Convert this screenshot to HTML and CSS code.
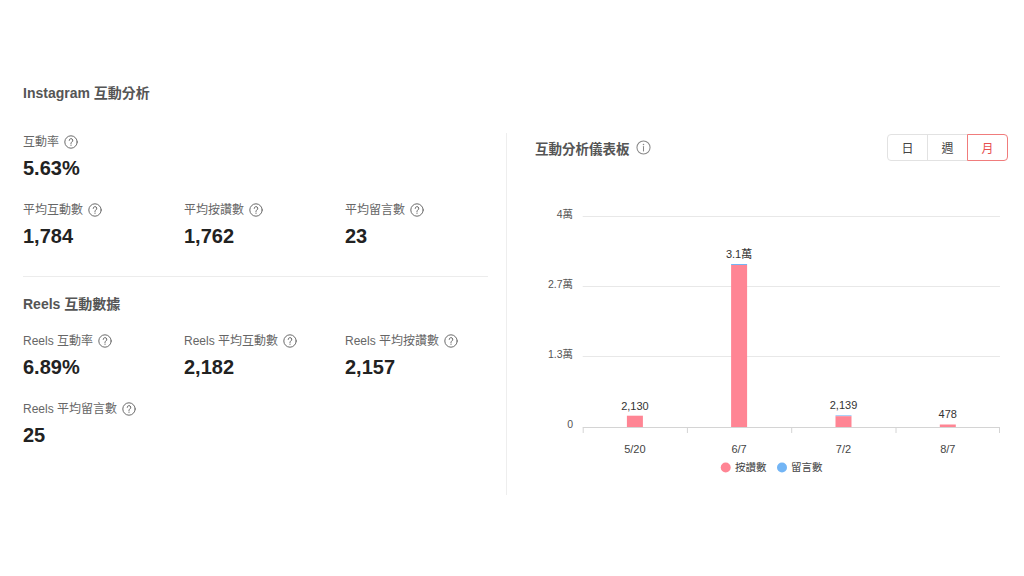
FILE: index.html
```html
<!DOCTYPE html>
<html lang="zh-Hant">
<head>
    <meta charset="UTF-8">
    <meta name="viewport" content="width=device-width, initial-scale=1.0">
    <title>Instagram 互動分析</title>
    <link rel="stylesheet" href="styles.css">
</head>
<body>
    <div class="dashboard">
        <section class="stats">
            <div class="statBlock">
                <h2 class="blockTitle">Instagram 互動分析</h2>
                <div class="metrics">
                    <div class="metric wide">
                        <div class="metricLabel">互動率 <svg class="help" viewBox="0 0 14 14"><circle cx="7" cy="7" r="6.2"/><path d="M5.2 5.4a1.8 1.8 0 1 1 2.5 1.7c-.5.2-.7.6-.7 1.1v.5"/><circle class="dot" cx="7" cy="10.2" r=".6"/></svg></div>
                        <div class="metricValue">5.63%</div>
                    </div>
                    <div class="metric">
                        <div class="metricLabel">平均互動數 <svg class="help" viewBox="0 0 14 14"><circle cx="7" cy="7" r="6.2"/><path d="M5.2 5.4a1.8 1.8 0 1 1 2.5 1.7c-.5.2-.7.6-.7 1.1v.5"/><circle class="dot" cx="7" cy="10.2" r=".6"/></svg></div>
                        <div class="metricValue">1,784</div>
                    </div>
                    <div class="metric">
                        <div class="metricLabel">平均按讚數 <svg class="help" viewBox="0 0 14 14"><circle cx="7" cy="7" r="6.2"/><path d="M5.2 5.4a1.8 1.8 0 1 1 2.5 1.7c-.5.2-.7.6-.7 1.1v.5"/><circle class="dot" cx="7" cy="10.2" r=".6"/></svg></div>
                        <div class="metricValue">1,762</div>
                    </div>
                    <div class="metric">
                        <div class="metricLabel">平均留言數 <svg class="help" viewBox="0 0 14 14"><circle cx="7" cy="7" r="6.2"/><path d="M5.2 5.4a1.8 1.8 0 1 1 2.5 1.7c-.5.2-.7.6-.7 1.1v.5"/><circle class="dot" cx="7" cy="10.2" r=".6"/></svg></div>
                        <div class="metricValue">23</div>
                    </div>
                </div>
            </div>
            <div class="statBlock reels">
                <h2 class="blockTitle">Reels 互動數據</h2>
                <div class="metrics">
                    <div class="metric">
                        <div class="metricLabel">Reels 互動率 <svg class="help" viewBox="0 0 14 14"><circle cx="7" cy="7" r="6.2"/><path d="M5.2 5.4a1.8 1.8 0 1 1 2.5 1.7c-.5.2-.7.6-.7 1.1v.5"/><circle class="dot" cx="7" cy="10.2" r=".6"/></svg></div>
                        <div class="metricValue">6.89%</div>
                    </div>
                    <div class="metric">
                        <div class="metricLabel">Reels 平均互動數 <svg class="help" viewBox="0 0 14 14"><circle cx="7" cy="7" r="6.2"/><path d="M5.2 5.4a1.8 1.8 0 1 1 2.5 1.7c-.5.2-.7.6-.7 1.1v.5"/><circle class="dot" cx="7" cy="10.2" r=".6"/></svg></div>
                        <div class="metricValue">2,182</div>
                    </div>
                    <div class="metric">
                        <div class="metricLabel">Reels 平均按讚數 <svg class="help" viewBox="0 0 14 14"><circle cx="7" cy="7" r="6.2"/><path d="M5.2 5.4a1.8 1.8 0 1 1 2.5 1.7c-.5.2-.7.6-.7 1.1v.5"/><circle class="dot" cx="7" cy="10.2" r=".6"/></svg></div>
                        <div class="metricValue">2,157</div>
                    </div>
                    <div class="metric">
                        <div class="metricLabel">Reels 平均留言數 <svg class="help" viewBox="0 0 14 14"><circle cx="7" cy="7" r="6.2"/><path d="M5.2 5.4a1.8 1.8 0 1 1 2.5 1.7c-.5.2-.7.6-.7 1.1v.5"/><circle class="dot" cx="7" cy="10.2" r=".6"/></svg></div>
                        <div class="metricValue">25</div>
                    </div>
                </div>
            </div>
        </section>

        <section class="chartPanel">
            <div class="chartHeader">
                <h2 class="chartTitle">互動分析儀表板 <svg class="info" viewBox="0 0 16 16"><circle cx="8" cy="8" r="7"/><path d="M8 7v4.6"/><circle class="dot" cx="8" cy="4.8" r=".8"/></svg></h2>
                <div class="periodTabs">
                    <button class="periodTab">日</button>
                    <button class="periodTab">週</button>
                    <button class="periodTab active">月</button>
                </div>
            </div>
            <svg class="chart" width="473" height="280" viewBox="0 0 473 280">
                <g class="grid">
                    <line x1="47.7" y1="16.5" x2="465" y2="16.5"/>
                    <line x1="47.7" y1="86.5" x2="465" y2="86.5"/>
                    <line x1="47.7" y1="156.5" x2="465" y2="156.5"/>
                </g>
                <g class="yLabels">
                    <text x="38" y="15">4萬</text>
                    <text x="38" y="85">2.7萬</text>
                    <text x="38" y="155">1.3萬</text>
                    <text x="38" y="225">0</text>
                </g>
                <g class="bars">
                    <rect class="likes" x="91.9" y="215.7" width="16" height="11.3"/>
                    <rect class="comments" x="196.1" y="64" width="16" height="1"/>
                    <rect class="likes" x="196.1" y="65" width="16" height="162"/>
                    <rect class="comments" x="300.5" y="215.4" width="16" height="0.8"/>
                    <rect class="likes" x="300.5" y="216.2" width="16" height="10.8"/>
                    <rect class="likes" x="404.8" y="224.5" width="16" height="2.5"/>
                </g>
                <g class="axis">
                    <line x1="47.7" y1="227.5" x2="465" y2="227.5"/>
                    <line x1="48.2" y1="227.5" x2="48.2" y2="233"/>
                    <line x1="152.4" y1="227.5" x2="152.4" y2="233"/>
                    <line x1="256.7" y1="227.5" x2="256.7" y2="233"/>
                    <line x1="361" y1="227.5" x2="361" y2="233"/>
                    <line x1="464.5" y1="227.5" x2="464.5" y2="233"/>
                </g>
                <g class="barLabels">
                    <text x="99.9" y="207">2,130</text>
                    <text x="204.1" y="55.5">3.1萬</text>
                    <text x="308.5" y="206.5">2,139</text>
                    <text x="412.8" y="215">478</text>
                </g>
                <g class="xLabels">
                    <text x="99.9" y="250">5/20</text>
                    <text x="204.1" y="250">6/7</text>
                    <text x="308.5" y="250">7/2</text>
                    <text x="412.8" y="250">8/7</text>
                </g>
                <g class="legend">
                    <circle class="likes" cx="190.7" cy="267.5" r="5"/>
                    <text x="200" y="268">按讚數</text>
                    <circle class="comments" cx="247" cy="267.5" r="5"/>
                    <text x="256" y="268">留言數</text>
                </g>
            </svg>
        </section>
    </div>
</body>
</html>
```

FILE: styles.css
```css
*{margin:0;padding:0;box-sizing:border-box;}

html,body{
    width:100%;
    height:100%;
    background:#fff;
    font-family:"Liberation Sans","Noto Sans CJK TC",sans-serif;
    color:#222;
}

.dashboard{
    display:flex;
    align-items:flex-start;
    padding:82px 16px 0 23px;
}

/* left side */
.stats{
    width:465px;
    flex:none;
}

.statBlock{
    padding-bottom:26px;
    border-bottom:1px solid #ececec;
}

.statBlock.reels{
    padding-top:16px;
    border-bottom:none;
}

.blockTitle{
    font-size:14px;
    line-height:22px;
    font-weight:700;
    color:#555;
}

.metrics{
    display:grid;
    grid-template-columns:161px 161px 1fr;
    row-gap:18px;
    margin-top:28px;
}

.reels .metrics{
    margin-top:16px;
}

.metric.wide{
    grid-column:1 / -1;
}

.metricLabel{
    display:flex;
    align-items:center;
    gap:5px;
    font-size:12px;
    line-height:20px;
    color:#666;
}

.help{
    width:14px;
    height:14px;
    fill:none;
    stroke:#6a6a6a;
    stroke-width:1;
    stroke-linecap:round;
}

.help .dot{
    fill:#6a6a6a;
    stroke:none;
}

.metricValue{
    margin-top:2px;
    font-size:20px;
    line-height:28px;
    font-weight:700;
    color:#222;
}

/* right side */
.chartPanel{
    flex:1;
    margin:51px 0 0 18px;
    height:362px;
    border-left:1px solid #eee;
    padding:1px 0 0 28px;
}

.chartHeader{
    display:flex;
    align-items:center;
    justify-content:space-between;
    height:27px;
}

.chartTitle{
    display:flex;
    align-items:center;
    gap:6px;
    font-size:13.5px;
    font-weight:700;
    color:#555;
}

.info{
    width:15px;
    height:15px;
    fill:none;
    stroke:#888;
    stroke-width:1.1;
    stroke-linecap:round;
}

.info .dot{
    fill:#888;
    stroke:none;
}

.periodTabs{
    display:flex;
    height:27px;
}

.periodTab{
    width:41px;
    height:27px;
    background:#fff;
    border:1px solid #e2e2e2;
    font-family:"Noto Sans CJK TC",sans-serif;
    font-size:12px;
    color:#444;
}

.periodTab:first-child{
    border-radius:4px 0 0 4px;
}

.periodTab + .periodTab{
    margin-left:-1px;
}

.periodTab:last-child{
    border-radius:0 4px 4px 0;
}

.periodTab.active{
    border-color:#f07c7c;
    color:#e8504f;
    position:relative;
}

.chart{
    display:block;
    margin-top:39px;
}

.chart .grid line{
    stroke:#e8e8e8;
    stroke-width:1;
}

.chart .axis line{
    stroke:#d4d4d4;
    stroke-width:1;
}

.chart text{
    dominant-baseline:middle;
}

.yLabels text{
    text-anchor:end;
    font-size:10.5px;
    fill:#555;
}

.barLabels text,.xLabels text{
    text-anchor:middle;
    font-size:11px;
    fill:#333;
}

.xLabels text{
    fill:#444;
}

.legend text{
    font-family:"Noto Sans CJK TC",sans-serif;
    font-size:10.5px;
    fill:#444;
}

.chart .likes{
    fill:#ff8594;
}

.chart .comments{
    fill:#73b5f5;
}
```
